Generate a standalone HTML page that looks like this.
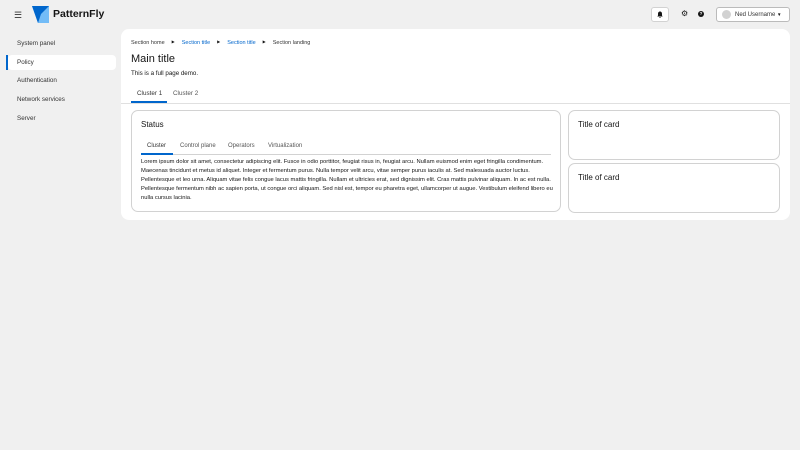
<!DOCTYPE html>
<html><head><style>
*{box-sizing:border-box;margin:0;padding:0}
body{width:800px;height:450px;background:#f0f0f0;font-family:"Liberation Sans",sans-serif;color:#151515;position:relative;overflow:hidden}
.a{position:absolute;white-space:nowrap}
.nav{font-size:6.3px;color:#333}
.card{position:absolute;background:#fff;border:1px solid #d2d2d2;border-radius:7px}
.lorem{position:absolute;left:141px;top:158px;width:412px;font-size:5.8px;line-height:9px;color:#151515;white-space:normal}
.sep{font-size:4px;margin:0 7px;color:#151515;vertical-align:1px}
</style></head><body>
<div class="a" style="left:14px;top:10px;font-size:9px;color:#333">☰</div>
<svg class="a" style="left:32px;top:6px" width="17" height="17" viewBox="0 0 17 17"><path d="M0 0h17v17H6z" fill="#73bcf7"/><path d="M0 0h17L9 8 6 17z" fill="#0066cc"/></svg>
<div class="a" style="left:53px;top:8px;font-size:10.5px;font-weight:bold">PatternFly</div>
<div class="a" style="left:651px;top:7px;width:18px;height:15px;background:#fff;border:1px solid #d2d2d2;border-radius:3px"></div>
<svg class="a" style="left:657px;top:11px" width="6" height="7" viewBox="0 0 6 7"><path d="M3 0.5C1.5 0.5 1 1.7 1 3v1.5L0.3 5.5h5.4L5 4.5V3C5 1.7 4.5 0.5 3 0.5z M2.2 6h1.6a.8.8 0 0 1-1.6 0z" fill="#151515"/></svg>
<div class="a" style="left:681px;top:9px;font-size:8px">⚙</div>
<div class="a" style="left:698px;top:11px;width:6px;height:6px;border-radius:50%;background:#151515;color:#fff;font-size:4.5px;text-align:center;line-height:6px;font-weight:bold">?</div>
<div class="a" style="left:716px;top:7px;width:74px;height:15px;background:#fff;border:1px solid #bbb;border-radius:3px"></div>
<div class="a" style="left:722px;top:10px;width:9px;height:9px;border-radius:50%;background:#d2d2d2"></div>
<div class="a" style="left:735px;top:11.5px;font-size:6px;color:#333">Ned Username</div>
<div class="a" style="left:777px;top:12px;font-size:4.5px">▼</div>

<div class="a nav" style="left:17px;top:40px">System panel</div>
<div class="a" style="left:8px;top:55px;width:108px;height:15px;background:#fff;border-radius:4px"></div>
<div class="a" style="left:6px;top:55px;width:2px;height:15px;background:#0066cc"></div>
<div class="a nav" style="left:17px;top:59px">Policy</div>
<div class="a nav" style="left:17px;top:77px">Authentication</div>
<div class="a nav" style="left:17px;top:96px">Network services</div>
<div class="a nav" style="left:17px;top:115px">Server</div>

<div class="a" style="left:121px;top:29px;width:669px;height:191px;background:#fff;border-radius:8px"></div>
<div class="a" style="left:131px;top:39px;font-size:5.5px;color:#333">Section home<span class="sep">▶</span><span style="color:#0066cc">Section title</span><span class="sep">▶</span><span style="color:#0066cc">Section title</span><span class="sep">▶</span>Section landing</div>
<div class="a" style="left:131px;top:53px;font-size:11px">Main title</div>
<div class="a" style="left:131px;top:70px;font-size:6.2px">This is a full page demo.</div>
<div class="a" style="left:137px;top:90px;font-size:6.3px;color:#333">Cluster 1</div>
<div class="a" style="left:173px;top:90px;font-size:6.3px;color:#555">Cluster 2</div>
<div class="a" style="left:121px;top:103px;width:669px;height:1px;background:#e0e0e0"></div>
<div class="a" style="left:131px;top:101px;width:36px;height:2px;background:#0066cc"></div>

<div class="card" style="left:131px;top:110px;width:430px;height:102px"></div>
<div class="a" style="left:141px;top:120px;font-size:8px">Status</div>
<div class="a" style="left:147px;top:143px;font-size:6px;color:#333">Cluster</div>
<div class="a" style="left:180px;top:143px;font-size:6px;color:#555">Control plane</div>
<div class="a" style="left:228px;top:143px;font-size:6px;color:#555">Operators</div>
<div class="a" style="left:268px;top:143px;font-size:6px;color:#555">Virtualization</div>
<div class="a" style="left:141px;top:154px;width:410px;height:1px;background:#d2d2d2"></div>
<div class="a" style="left:141px;top:153px;width:32px;height:2px;background:#0066cc"></div>
<div class="lorem">Lorem ipsum dolor sit amet, consectetur adipiscing elit. Fusce in odio porttitor, feugiat risus in, feugiat arcu. Nullam euismod enim eget fringilla condimentum. Maecenas tincidunt et metus id aliquet. Integer et fermentum purus. Nulla tempor velit arcu, vitae semper purus iaculis at. Sed malesuada auctor luctus. Pellentesque et leo urna. Aliquam vitae felis congue lacus mattis fringilla. Nullam et ultricies erat, sed dignissim elit. Cras mattis pulvinar aliquam. In ac est nulla. Pellentesque fermentum nibh ac sapien porta, ut congue orci aliquam. Sed nisl est, tempor eu pharetra eget, ullamcorper ut augue. Vestibulum eleifend libero eu nulla cursus lacinia.</div>

<div class="card" style="left:568px;top:110px;width:212px;height:50px"></div>
<div class="a" style="left:578px;top:120px;font-size:8px">Title of card</div>
<div class="card" style="left:568px;top:163px;width:212px;height:50px"></div>
<div class="a" style="left:578px;top:173px;font-size:8px">Title of card</div>
</body></html>
